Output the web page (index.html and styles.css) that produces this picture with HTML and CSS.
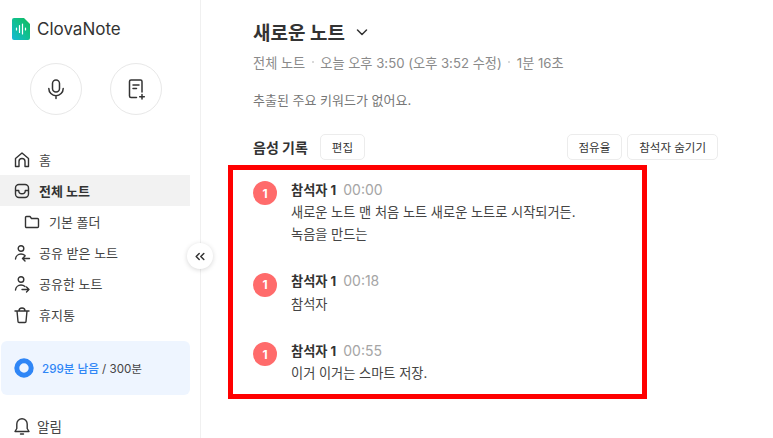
FILE: index.html
```html
<!DOCTYPE html>
<html lang="ko">

<head>
    <meta charset="UTF-8">
    <title>ClovaNote</title>
    <link rel="stylesheet" href="styles.css">
</head>

<body>
    <div class="container">
        <aside class="sidebar">
            <div class="logo">
                <svg width="18" height="22" viewBox="0 0 18 22">
                    <defs>
                        <linearGradient id="logoGrad" x1="0" y1="1" x2="1" y2="0">
                            <stop offset="0" stop-color="#14b8d8" />
                            <stop offset="0.55" stop-color="#10c08c" />
                            <stop offset="1" stop-color="#0fb95a" />
                        </linearGradient>
                    </defs>
                    <path d="M2 0H12L18 6V20a2 2 0 0 1-2 2H2a2 2 0 0 1-2-2V2a2 2 0 0 1 2-2Z" fill="url(#logoGrad)" />
                    <path d="M4.500 10v2M7.500 7.500v7M10.500 6v10M13.500 10v2" stroke="#fff" stroke-width="1.200" stroke-linecap="round" fill="none" />
                </svg>
                <span>ClovaNote</span>
            </div>
            <div class="actions">
                <button class="circleBtn">
                    <svg width="22" height="22" viewBox="0 0 22 22" fill="none" stroke="#333" stroke-width="1.500" stroke-linecap="round">
                        <rect x="7.500" y="2" width="7" height="12" rx="3.500" />
                        <path d="M3.800 10.500a7.200 7.200 0 0 0 14.400 0M11 17.800V20.500" />
                    </svg>
                </button>
                <button class="circleBtn">
                    <svg width="22" height="22" viewBox="0 0 22 22" fill="none" stroke="#333" stroke-width="1.500" stroke-linecap="round" stroke-linejoin="round">
                        <path d="M11.500 19.500H6a1.500 1.500 0 0 1-1.500-1.500V3.500A1.500 1.500 0 0 1 6 2h9.500A1.500 1.500 0 0 1 17 3.500V14" />
                        <path d="M8 7h6M8 10.500h3.500M17 16.500v4.500M14.700 18.800h4.600" />
                    </svg>
                </button>
            </div>
            <ul class="menu">
                <li>
                    <svg width="18" height="18" viewBox="0 0 18 18" fill="none" stroke="#333" stroke-width="1.400" stroke-linejoin="round">
                        <path d="M2.500 15.500V7.500L9 2l6.500 5.500v8h-3.500v-5a3 3 0 0 0-6 0v5Z" />
                    </svg>
                    <span>홈</span>
                </li>
                <li class="active">
                    <svg width="18" height="18" viewBox="0 0 18 18" fill="none" stroke="#333" stroke-width="1.400" stroke-linejoin="round">
                        <rect x="2.500" y="2.500" width="13" height="13" rx="3.500" />
                        <path d="M2.500 8.500h3.200a3.300 3.300 0 0 0 6.600 0h3.200" />
                    </svg>
                    <span>전체 노트</span>
                </li>
                <li class="sub">
                    <svg width="18" height="18" viewBox="0 0 18 18" fill="none" stroke="#333" stroke-width="1.400" stroke-linejoin="round">
                        <path d="M2.500 4.500a1 1 0 0 1 1-1h3.500l1.500 2h6a1 1 0 0 1 1 1v7a1 1 0 0 1-1 1h-11a1 1 0 0 1-1-1Z" />
                    </svg>
                    <span>기본 폴더</span>
                </li>
                <li>
                    <svg width="18" height="18" viewBox="0 0 18 18" fill="none" stroke="#333" stroke-width="1.400" stroke-linecap="round" stroke-linejoin="round">
                        <circle cx="8" cy="4.500" r="2.800" />
                        <path d="M2.500 15a5.500 5.500 0 0 1 5.500-5 6 6 0 0 1 4 1.500M16.500 14.500H9.500M12 12l-2.500 2.500L12 17" />
                    </svg>
                    <span>공유 받은 노트</span>
                </li>
                <li>
                    <svg width="18" height="18" viewBox="0 0 18 18" fill="none" stroke="#333" stroke-width="1.400" stroke-linecap="round" stroke-linejoin="round">
                        <circle cx="8" cy="4.500" r="2.800" />
                        <path d="M2.500 15a5.500 5.500 0 0 1 5.500-5 6 6 0 0 1 4 1.500M9 14.500h7M13.500 12l2.500 2.500L13.500 17" />
                    </svg>
                    <span>공유한 노트</span>
                </li>
                <li>
                    <svg width="18" height="18" viewBox="0 0 18 18" fill="none" stroke="#333" stroke-width="1.400" stroke-linecap="round" stroke-linejoin="round">
                        <path d="M2 5h14M4 5l1 10.500a1 1 0 0 0 1 1h6a1 1 0 0 0 1-1L14 5M6 5a3 3 0 0 1 6 0" />
                    </svg>
                    <span>휴지통</span>
                </li>
            </ul>
            <div class="quota">
                <svg width="20" height="20" viewBox="0 0 20 20" fill="none">
                    <circle cx="10" cy="10" r="7.200" stroke="#2f86f6" stroke-width="5" />
                </svg>
                <span><b>299분 남음</b> / 300분</span>
            </div>
            <div class="alarm">
                <svg width="18" height="20" viewBox="0 0 18 20" fill="none" stroke="#333" stroke-width="1.400" stroke-linejoin="round" stroke-linecap="round">
                    <path d="M2 15.500h14l-1.800-3V8a5.200 5.200 0 0 0-10.400 0v4.500ZM7.500 18h3" />
                </svg>
                <span>알림</span>
            </div>
            <button class="collapse">
                <svg width="10" height="9" viewBox="0 0 10 9" fill="none" stroke="#333" stroke-width="1.500" stroke-linecap="round" stroke-linejoin="round">
                    <path d="M4.200 1.500 1.200 4.500l3 3M8.800 1.500l-3 3 3 3" />
                </svg>
            </button>
        </aside>

        <main class="content">
            <div class="title">
                <h1>새로운 노트</h1>
                <svg width="14" height="14" viewBox="0 0 14 14" fill="none" stroke="#333" stroke-width="1.500" stroke-linecap="round" stroke-linejoin="round">
                    <path d="M2.500 5 7 9.500 11.500 5" />
                </svg>
            </div>
            <div class="meta">
                <span>전체 노트</span>
                <i></i>
                <span>오늘 오후 3:50 (오후 3:52 수정)</span>
                <i></i>
                <span>1분 16초</span>
            </div>
            <p class="keywords">추출된 주요 키워드가 없어요.</p>
            <div class="recordHead">
                <h2>음성 기록</h2>
                <button class="smallBtn">편집</button>
                <div class="recordBtns">
                    <button class="smallBtn">점유율</button>
                    <button class="smallBtn">참석자 숨기기</button>
                </div>
            </div>
            <div class="transcript">
                <div class="entry">
                    <div class="badge">1</div>
                    <div>
                        <div class="who"><b>참석자 1</b><span>00:00</span></div>
                        <p>새로운 노트 맨 처음 노트 새로운 노트로 시작되거든.<br>녹음을 만드는</p>
                    </div>
                </div>
                <div class="entry">
                    <div class="badge">1</div>
                    <div>
                        <div class="who"><b>참석자 1</b><span>00:18</span></div>
                        <p>참석자</p>
                    </div>
                </div>
                <div class="entry">
                    <div class="badge">1</div>
                    <div>
                        <div class="who"><b>참석자 1</b><span>00:55</span></div>
                        <p>이거 이거는 스마트 저장.</p>
                    </div>
                </div>
            </div>
        </main>
    </div>
</body>

</html>
```

FILE: styles.css
```css
* {
    margin: 0;
    padding: 0;
    box-sizing: border-box;
}

body {
    font-family: Inter, "Noto Sans CJK KR", sans-serif;
    background-color: white;
    color: #333;
    height: 438px;
    overflow: hidden;
}

button {
    font-family: inherit;
    background: white;
    cursor: pointer;
}

.container {
    display: flex;
    height: 438px;
}

.sidebar {
    position: relative;
    width: 201px;
    flex-shrink: 0;
    border-right: 1px solid #f0f0f0;
}

.logo {
    display: flex;
    align-items: center;
    gap: 7px;
    padding: 18px 0 0 12px;
    height: 40px;
    font-size: 17px;
    color: #333;
}

.actions {
    display: flex;
    gap: 28px;
    padding: 23px 0 0 30px;
}

.circleBtn {
    width: 52px;
    height: 52px;
    border-radius: 50%;
    border: 1px solid #e8e8e8;
    display: flex;
    align-items: center;
    justify-content: center;
}

.menu {
    list-style: none;
    margin-top: 29px;
    width: 190px;
}

.menu li {
    display: flex;
    align-items: center;
    gap: 8px;
    height: 31px;
    padding-left: 13px;
    font-size: 13px;
    color: #444;
}

.menu li.active {
    background-color: #f2f2f2;
    font-weight: 700;
    color: #333;
}

.menu li.sub {
    padding-left: 23px;
}

.quota {
    display: flex;
    align-items: center;
    gap: 8px;
    width: 189px;
    height: 54px;
    margin: 11px 0 0 1px;
    padding-left: 13px;
    background-color: #eef5ff;
    border-radius: 6px;
    font-size: 11.600px;
    color: #444;
}

.quota b {
    font-weight: 500;
    color: #2f86f6;
}

.alarm {
    display: flex;
    align-items: center;
    gap: 6px;
    margin-top: 21px;
    padding-left: 13px;
    font-size: 13.500px;
    color: #444;
}

.collapse {
    position: absolute;
    top: 243px;
    left: 187px;
    width: 26px;
    height: 26px;
    border: none;
    border-radius: 50%;
    box-shadow: 0 1px 5px rgba(0, 0, 0, 0.16);
    display: flex;
    align-items: center;
    justify-content: center;
}

.content {
    flex: 1;
    padding: 18px 55px 0 27px;
}

.title {
    display: flex;
    align-items: center;
    gap: 10px;
    padding-left: 25px;
    height: 27px;
}

.title h1 {
    font-size: 19px;
    font-weight: 700;
    color: #333;
}

.meta {
    display: flex;
    align-items: center;
    gap: 6.500px;
    padding-left: 25px;
    margin-top: 7px;
    height: 20px;
    font-size: 13.200px;
    color: #8a8a8a;
}

.meta i {
    width: 2px;
    height: 2px;
    border-radius: 50%;
    background-color: #ccc;
}

.keywords {
    padding-left: 25px;
    margin-top: 18px;
    height: 20px;
    line-height: 20px;
    font-size: 13px;
    color: #777;
}

.recordHead {
    display: flex;
    align-items: center;
    gap: 12px;
    padding-left: 25px;
    margin-top: 24px;
    height: 26px;
}

.recordHead h2 {
    font-size: 14px;
    font-weight: 700;
    color: #333;
}

.recordBtns {
    display: flex;
    gap: 5px;
    margin-left: auto;
}

.smallBtn {
    height: 26px;
    padding: 0 11px;
    border: 1px solid #ececec;
    border-radius: 5px;
    font-size: 11.500px;
    color: #333;
}

.transcript {
    width: 419px;
    height: 234px;
    margin-top: 5px;
    padding: 9px 20px 0 20px;
    border: 5px solid red;
}

.entry {
    display: flex;
    gap: 14px;
    margin-bottom: 25.500px;
}

.badge {
    width: 24px;
    height: 24px;
    margin-top: 2px;
    border-radius: 50%;
    background-color: #ff6b6b;
    color: white;
    font-size: 12px;
    font-weight: 700;
    display: flex;
    align-items: center;
    justify-content: center;
    flex-shrink: 0;
}

.who {
    display: flex;
    align-items: center;
    gap: 7px;
    height: 20px;
    font-size: 13.200px;
}

.who b {
    color: #333;
}

.who span {
    color: #a5a5a5;
    font-size: 14px;
}

.entry p {
    margin-top: 2px;
    font-size: 13.200px;
    line-height: 22px;
    color: #444;
}
```
